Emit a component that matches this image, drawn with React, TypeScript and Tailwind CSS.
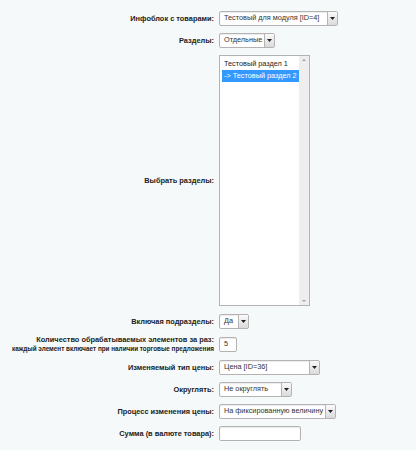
import React from "react";

function Arrow() {
  return (
    <div className="flex h-full w-[10px] shrink-0 items-center justify-center border-l border-[#b5b5b5] bg-gradient-to-b from-[#fafafa] to-[#dadada]">
      <svg width="5" height="3" viewBox="0 0 5 3">
        <polygon points="0,0 5,0 2.5,3" fill="#222" />
      </svg>
    </div>
  );
}

function Select({ text, w }: { text: string; w: string }) {
  return (
    <div className={`flex h-[15px] ${w} items-center rounded-[2px] border border-[#b3b3b3] bg-white shadow-[inset_0_1px_1px_rgba(0,0,0,0.08)]`}>
      <div className="flex-1 overflow-hidden whitespace-nowrap pl-[4px] text-[7.3px] leading-none text-[#333]">{text}</div>
      <Arrow />
    </div>
  );
}

function Input({ text, w }: { text: string; w: string }) {
  return (
    <div className={`flex h-[15px] ${w} items-center rounded-[2px] border border-[#b3b3b3] bg-white pl-[4px] text-[7.3px] leading-none text-[#333] shadow-[inset_0_1px_1px_rgba(0,0,0,0.08)]`}>
      {text}
    </div>
  );
}

function Row({ label, h, children }: { label: React.ReactNode; h: string; children: React.ReactNode }) {
  return (
    <div className={`flex ${h} items-center`}>
      <div className="w-[214px] shrink-0 text-right text-[7.4px] font-bold leading-[9px] text-[#222]">{label}</div>
      <div className="ml-[5px]">{children}</div>
    </div>
  );
}

export default function App() {
  return (
    <div
      className="h-[450px] w-[416px] bg-[#f5f9f9] pt-[7px]"
      style={{ fontFamily: '"Liberation Sans", Arial, sans-serif' }}
    >
      <Row label="Инфоблок с товарами:" h="h-[22px]">
        <Select text="Тестовый для модуля [ID=4]" w="w-[119px]" />
      </Row>
      <Row label="Разделы:" h="h-[22px]">
        <Select text="Отдельные" w="w-[56px]" />
      </Row>
      <Row label="Выбрать разделы:" h="h-[259px]">
        <div className="flex h-[251px] w-[91px] border border-[#b3b3b3] bg-white">
          <div className="flex-1 pl-[2px] pt-[2px] text-[7.3px] leading-[12px] text-[#222]">
            <div className="whitespace-nowrap pl-[2px]">Тестовый раздел 1</div>
            <div className="whitespace-nowrap bg-[#3399ff] pl-[2px] text-white">-&gt; Тестовый раздел 2</div>
          </div>
          <div className="flex w-[10px] flex-col items-center justify-between bg-[#eeeeee] py-[3px]">
            <svg width="4" height="2" viewBox="0 0 4 2">
              <polygon points="0,2 4,2 2,0" fill="#a0a0a0" />
            </svg>
            <svg width="4" height="2" viewBox="0 0 4 2">
              <polygon points="0,0 4,0 2,2" fill="#a0a0a0" />
            </svg>
          </div>
        </div>
      </Row>
      <Row label="Включая подразделы:" h="h-[22px]">
        <Select text="Да" w="w-[30px]" />
      </Row>
      <Row
        label={
          <>
            <div>Количество обрабатываемых элементов за раз:</div>
            <div className="text-[6.35px] leading-[9px]">каждый элемент включает при наличии торговые предложения</div>
          </>
        }
        h="h-[24px]"
      >
        <Input text="5" w="w-[18px]" />
      </Row>
      <Row label="Изменяемый тип цены:" h="h-[22px]">
        <Select text="Цена [ID=36]" w="w-[101px]" />
      </Row>
      <Row label="Округлять:" h="h-[22px]">
        <Select text="Не округлять" w="w-[73px]" />
      </Row>
      <Row label="Процесс изменения цены:" h="h-[22px]">
        <Select text="На фиксированную величину" w="w-[117px]" />
      </Row>
      <Row label="Сумма (в валюте товара):" h="h-[22px]">
        <Input text="" w="w-[82px]" />
      </Row>
    </div>
  );
}
